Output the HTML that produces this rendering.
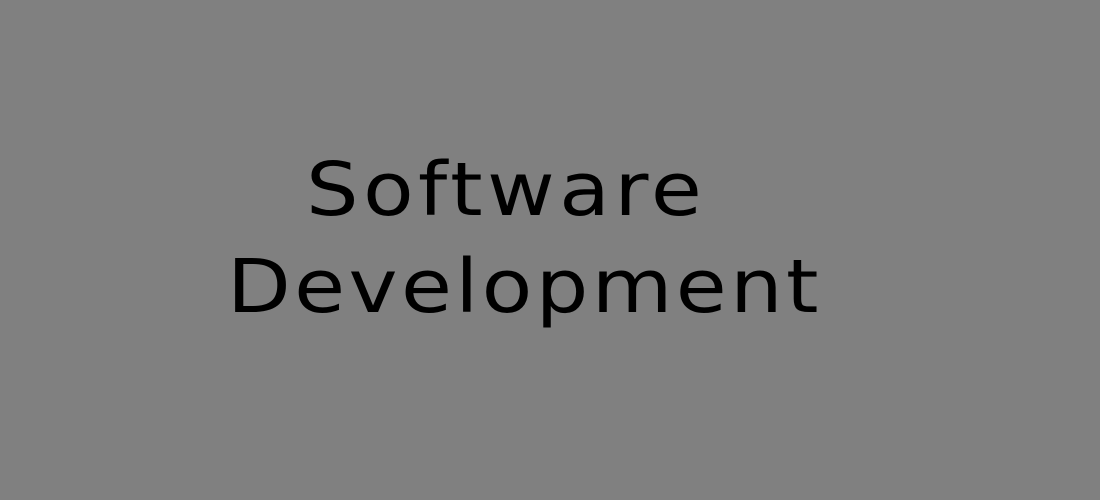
<!DOCTYPE html>
<html><head><style>
html,body{margin:0;padding:0;}
body{width:1100px;height:500px;background:#808080;position:relative;overflow:hidden;font-family:"DejaVu Sans","Liberation Sans",sans-serif;color:#000;}
.t{position:absolute;font-size:74px;line-height:73px;letter-spacing:3.6px;white-space:nowrap;transform:scaleX(1.12);transform-origin:0 0;}
</style></head><body>
<div class="t" style="left:306px;top:154px;letter-spacing:3.9px;">Software</div>
<div class="t" style="left:227px;top:251px;letter-spacing:3.0px;">Development</div>
</body></html>
